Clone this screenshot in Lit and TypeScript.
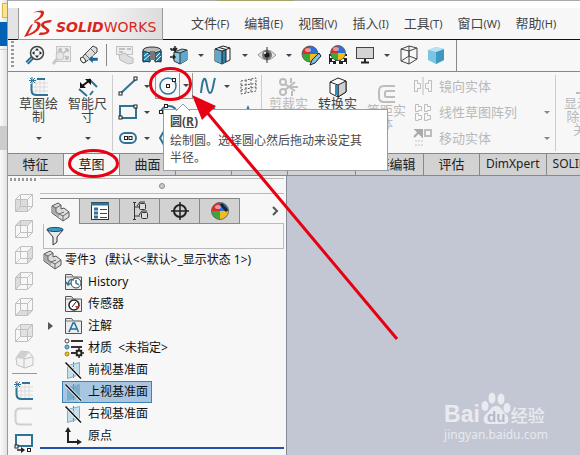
import { LitElement, html, svg, css, nothing, TemplateResult } from "lit";
import { customElement, property, state } from "lit/decorators.js";
import { classMap } from "lit/directives/class-map.js";

const STEEL = "#2f7396";
const FADE = "#bdbdbd";

const node = (x: number, y: number) =>
  svg`<rect x=${x - 1.5} y=${y - 1.5} width="3" height="3" fill="#fff" stroke="#222" />`;

const cubeFace = (face: TemplateResult | ReturnType<typeof svg>) => svg`
  ${face}
  <path d="M1.500 6.500h12v12h-12z M6.500 1.500h12v12h-12z M1.500 6.500l5-5 M13.500 6.500l5-5 M13.500 18.500l5-5 M1.500 18.500l5-5" fill="none" stroke="#c0c0c0" />`;

const ball = (x: number, y: number, r: number) => svg`
  <g transform="translate(${x} ${y})">
    <path d="M0 0V${-r}A${r} ${r} 0 0 0 ${-r} 0Z" fill="#e02a2a" />
    <path d="M0 0H${r}A${r} ${r} 0 0 0 0 ${-r}Z" fill="#2f6fd6" />
    <path d="M0 0H${-r}A${r} ${r} 0 0 0 0 ${r}Z" fill="#3aa63c" />
    <path d="M0 0V${r}A${r} ${r} 0 0 0 ${r} 0Z" fill="#f0bd1c" />
    <circle r=${r} fill="none" stroke="#555" stroke-width=".8" />
    <ellipse cx="-2" cy="-4" rx="3" ry="2" fill="#fff" opacity=".5" />
  </g>`;

const plane = (fill: string) => svg`
  <path d="M3.500 5.500l12-3v12l-12 4z" fill=${fill} stroke="#86abc2" />
  <path d="M9.500 2v16" stroke="#5d8ba8" stroke-dasharray="2 1" />
  <path d="M1.500 2.500l15.500 16" stroke="#fff" stroke-width="3" />
  <path d="M1.500 2.500l15.500 16" stroke="#111" stroke-width="1.500" />`;

const part = svg`
  <path d="M2 4l6-3 3 2v4l3-1 5 4v5l-6 4-11-8z" fill="#dcdcdc" stroke="#555" stroke-linejoin="round" />
  <path d="M2 4l4 2v7l-4-3zM6 10l3 2v4l-3-3z" fill="#aaa" />
  <path d="M2 4l4 2 5-3M6 6v4l3 2 5-2M9 12l4 2 6-4M13 14v5" fill="none" stroke="#666" />`;

const folder = (inner: ReturnType<typeof svg>) => svg`
  <path d="M1.500 17.500v-15h6l2 2.500h8v12.500z" fill="#ececec" stroke="#555" />
  <path d="M2 5h7" stroke="#777" />
  ${inner}`;

const ICONS: Record<string, ReturnType<typeof svg>> = {
  zoom: svg`
    <path d="M8 12l-6 6" stroke="#1e5d80" stroke-width="4" />
    <path d="M8 12l-6 6" stroke="#6fb6d8" stroke-width="1.500" />
    <circle cx="12" cy="8" r="6.500" fill="#f2f6f8" stroke="#444" stroke-width="1.500" />
    <path d="M12 3l2 2.500h-4zM12 13l2-2.500h-4zM7 8l2.500-2v4zM17 8l-2.500-2v4z" fill="#222" />`,
  zoomArea: svg`
    <rect x="4.500" y="1.500" width="14" height="15" fill="#ededed" stroke="#c4c4c4" />
    <path d="M7 4l4 4M16 4l-4 4M16 14l-3-3M7 4h3M7 4v3M16 4h-3M16 4v3M16 14v-3M16 14h-3" stroke="#bbb" fill="none" stroke-width="1.500" />
    <circle cx="8" cy="11" r="4" fill="#e6e6e6" stroke="#c4c4c4" />
    <path d="M5 14l-4 5" stroke="#c9c9c9" stroke-width="3" />`,
  previous: svg`
    <path d="M2 15L5 10 14 1l4 2v4L8 16l-4 2z" fill="#ddd" stroke="#444" />
    <path d="M6 9l4 4M12 4l4 4" stroke="#666" /><ellipse cx="4" cy="15" rx="2" ry="3" transform="rotate(-40 4 15)" fill="#fff" stroke="#444" />
    <path d="M9 14l5-4v2.500h5v3.500h-5v2.500z" fill="#1c658f" stroke="#fff" stroke-width=".5" />`,
  sectionOff: svg`
    <rect x="1.500" y="1.500" width="16" height="8" fill="#eee" stroke="#c2c2c2" />
    <path d="M4 4h6M12 4h4M4 7h4" stroke="#c2c2c2" stroke-width="2" />
    <path d="M4 10l6-2 3 3 5 2v5l-5 1-8-4z" fill="#ddd" stroke="#bbb" />`,
  section: svg`
    <path d="M1 5c1-4 17-4 18 0v12l-6-1V7H8v9l-7 1z" fill="#bbb" stroke="#333" />
    <path d="M1 6l7 2v9l-7-1z" fill="#2f86ad" stroke="#123c52" /><path d="M19 6l-6 2v9l6-1z" fill="#2f86ad" stroke="#123c52" />
    <path d="M2 11l4-3M2 15l6-5M14 12l4-4M14 16l5-5" stroke="#d9f0fa" />
    <path d="M8 8c1-1.500 4-1.500 5 0v7H8z" fill="#777" />`,
  orient: svg`
    <path d="M5 7l8-3 5 1v10l-7 4-6-3z" fill="#8cc6e2" stroke="#333" />
    <path d="M11 8l7-3v10l-7 4z" fill="#5fa9cc" />
    <path d="M5 7l6 1v11M11 8l7-3" stroke="#333" fill="none" />
    <path d="M6 1v4M4 3l2 3 2-3M1 12h5M4 10l2 2-2 2M2 5h3M2 5v-2" stroke="#222" fill="none" stroke-width="1.500" />`,
  display: svg`
    <path d="M2 4l8-3 7 2v12l-8 4-7-3z" fill="#f3f5f6" stroke="#222" stroke-linejoin="round" />
    <path d="M2 4l7 2v13l-7-3z" fill="#5ba9cd" /><path d="M9 6l4-1.500v12.500l-4 2z" fill="#2f7fa8" />
    <path d="M2 4l7 2 8-3M9 6v13M13 4.500v12.500M6 2.500l7 2" stroke="#222" fill="none" />`,
  eye: svg`
    <path d="M1 10q9-10 18 0q-9 10-18 0z" fill="#e3e3e3" stroke="#999" />
    <circle cx="10" cy="10" r="5" fill="#777" /><circle cx="10" cy="10" r="2.500" fill="#111" />
    <path d="M10 2v16" stroke="#333" /><circle cx="8" cy="8" r="1" fill="#fff" />`,
  appearance: svg`${ball(9, 9, 8)}<path d="M18 8l-7 7-2 5 5-2 6-7z" fill="#7fc3e3" stroke="#123" />`,
  scene: svg`
    <rect x="1" y="9" width="18" height="10" fill="#222" />
    <path d="M2 11h3v2H2zM8 16h3v3H8zM4 14h3v2H4zM13 14h3v2h-3zM16 11h3v2h-3zM2 17h3v2H2zM15 17h3v2h-3z" fill="#fff" />${ball(10, 8, 7.5)}`,
  monitor: svg`
    <rect x="1.500" y="2.500" width="17" height="11" fill="#d4d4d4" stroke="#444" />
    <path d="M10 14v4M6 17.500h8" stroke="#222" stroke-width="2" />`,
  wire: svg`
    <path d="M2 4l8-3 8 2v11l-8 5-8-3zM2 4l8 2 8-3M10 6v13M10 1v10M2 16l8-5 8 3" fill="none" stroke="#444" />`,
  solid: svg`
    <path d="M2 5l8-3 8 2v11l-8 4-8-4z" fill="#7cc4e4" /><path d="M10 7l8-3v11l-8 4z" fill="#4098c0" />
    <path d="M2 5l8-3 8 2-8 3z" fill="#b9e2f3" />`,
  sketch: svg`
    <path d="M7 2v17M11 2v17M15 2v17M3 6h16M3 10h16M3 14h16" stroke="#dcdcdc" />
    <path d="M8 2h8M2.500 7v6q0 5 5 5H19" stroke=${STEEL} stroke-width="2" fill="none" />
    <path d="M3 0v7M0 3.500h7M1 1l5 5M6 1L1 6" stroke=${STEEL} />`,
  dimension: svg`
    <path d="M11 2l8 8M1 12l8 7M12 18l3-4" stroke=${STEEL} stroke-width="2" fill="none" />
    <path d="M3 10l9-7" stroke="#111" stroke-width="2" /><path d="M7 2h6v6zM2 5v6h6z" fill="#111" />`,
  line: svg`<path d="M3 17L18 3" stroke=${STEEL} stroke-width="2" />${node(2.5, 17.5)}${node(17.5, 2.5)}`,
  rect: svg`<rect x="2" y="4" width="16" height="12" fill="none" stroke=${STEEL} stroke-width="2" />${node(2.5, 15.5)}${node(17.5, 4.5)}`,
  slot: svg`<rect x="2" y="5" width="16" height="10" rx="5" fill="none" stroke=${STEEL} stroke-width="2" />${node(8, 10)}${node(12.5, 10)}`,
  circle: svg`<circle cx="10" cy="10" r="8" fill="none" stroke=${STEEL} stroke-width="1.500" />${node(10, 10)}${node(16, 4)}`,
  arc: svg`<path d="M2 12q2-8 9-8t8 8" fill="none" stroke=${STEEL} stroke-width="2" />${node(3, 10)}${node(8, 4)}`,
  polygon: svg`<path d="M6 3h8l5 7-5 7H6l-4-7z" fill="none" stroke=${STEEL} stroke-width="2" />`,
  spline: svg`<path d="M3 17C4 8 5 2 7 3S9 17 12 17 15 8 17 2" fill="none" stroke=${STEEL} stroke-width="2" />`,
  ellipse: svg`<circle cx="10" cy="10" r="7" fill="none" stroke=${STEEL} stroke-width="2" />`,
  planeGrid: svg`<path d="M3 5l15-3v13L3 18zM8 4v13M13 3v13M3 9.500l15-2M3 14l15-3" fill="none" stroke="#555" stroke-dasharray="2 1.500" />`,
  cone: svg`<path d="M5 18l5-13 5 13" fill="none" stroke=${STEEL} stroke-width="1.500" />`,
  trim: svg`
    <g fill="none" stroke="#bcbcbc" stroke-width="2"><circle cx="4" cy="5" r="3" /><circle cx="4" cy="15" r="3" />
    <path d="M6 7l10 7M6 13L16 5M9 10h10M12 1v5M13 14v5" /></g>`,
  convert: svg`
    <path d="M2 5l8-4 8 3v11l-8 5-8-4z" fill="#fff" stroke="#222" stroke-linejoin="round" />
    <path d="M10 8l8-4v11l-8 5z" fill="#d0d0d0" stroke="#222" /><path d="M2 5l8 3M10 8v12" stroke="#222" fill="none" />
    <path d="M8.500 8v10" stroke="#2a8fc0" stroke-width="3" />`,
  offset: svg`<path d="M18 2H7q-5 0-5 5v6q0 5 5 5h11M18 7h-8q-2 0-2 2v3q0 1 1 1h9" fill="none" stroke=${FADE} stroke-width="2" />`,
  mirror: svg`<path d="M10 1v18M1.500 4.500h3v3h3v5h-3v3h-3zM18.500 4.500h-3v3h-3v5h3v3h3z" fill="none" stroke=${FADE} />`,
  pattern: svg`
    ${[[2, 2], [11, 2], [2, 11], [11, 11]].map(([x, y]) => svg`<path transform="translate(${x} ${y})" d="M.5.500h3v2h3v4h-3v1h-3z" fill="none" stroke=${FADE} />`)}`,
  move: svg`
    <path d="M1 9l6-6M3 2h6v6z" stroke="#aaa" stroke-width="2" fill="#aaa" /><rect x="12" y="2" width="6" height="6" fill="none" stroke=${FADE} stroke-width="2" />
    <path d="M2 13h8M2 17h8" stroke="#ddd" stroke-width="2" stroke-dasharray="2 1" />`,
  relations: svg`<path d="M6 1v14M0 16h14" stroke=${FADE} stroke-width="2" />`,
  part,
  props: svg`
    <rect x="1.500" y="1.500" width="17" height="17" fill="#fff" stroke="#333" /><path d="M1 3h18" stroke=${STEEL} stroke-width="3" />
    <path d="M4 8h4M4 12h4M4 16h4" stroke=${STEEL} stroke-width="3" /><path d="M10 8.500h7M10 12.500h7M10 16.500h7" stroke="#444" />`,
  config: svg`
    <path d="M3 1.500h3M3 18.500h3M4.500 1v18M5 6h4M5 15h5" stroke="#333" fill="none" />
    <rect x="9.500" y="2.500" width="6" height="6" rx="1" fill="#ddd" stroke="#333" /><rect x="11.500" y="11.500" width="6" height="6" rx="1" fill="#ddd" stroke="#333" />
    <path d="M7 5l3-4h5M9 14l3-4h5" stroke="#333" fill="none" />`,
  target: svg`<circle cx="10" cy="10" r="6" fill="none" stroke="#222" stroke-width="2" /><path d="M10 1v18M1 10h18" stroke="#222" stroke-width="1.500" />`,
  render: svg`${ball(10, 10, 8.5)}<path d="M11 3l6 7" stroke="#222" stroke-width="3" />`,
  filter: svg`
    <path d="M2 4l6 7v8l4-3v-5l6-7z" fill="#e9e9e9" stroke="#333" /><ellipse cx="10" cy="3.500" rx="8" ry="2" fill="#3e9cc6" stroke="#1d4e68" />`,
  history: folder(svg`<circle cx="12" cy="11" r="5" fill="#fff" stroke="#444" /><path d="M12 8v3l3 2M4 12q1-6 6-4M2 10l2 3 3-2" fill="none" stroke=${STEEL} stroke-width="1.500" />`),
  sensor: folder(svg`<circle cx="10" cy="11" r="5" fill="#fff" stroke="#222" stroke-width="1.500" /><path d="M8 13l4-5" stroke="#222" /><path d="M11 12h4l-2 3z" fill="#e0401c" />`),
  note: folder(svg`<path d="M5 16l4-9h1.500l4 9M7 13h6" fill="none" stroke="#1f6f9c" stroke-width="1.500" />`),
  material: svg`
    <circle cx="3" cy="3" r="2" fill="#fff" stroke="#444" /><circle cx="3" cy="9" r="2" fill="#6cc0e6" stroke=${STEEL} /><circle cx="3" cy="16" r="2" fill="#f4c01c" stroke="#a8820d" />
    <path d="M7 3h12M7 9h11M7 15h4" stroke="#333" stroke-width="2" /><circle cx="15" cy="15" r="2.500" fill="#eee" stroke="#222" stroke-width="2" />
    <path d="M15 10v2M15 18v2M10 15h2M18 15h2M12 12l1 1M18 12l-1 1M12 18l1-1M18 18l-1-1" stroke="#222" stroke-width="1.500" />`,
  plane: plane("#c5dfec"),
  planeOn: plane("#79aecb"),
  origin: svg`<path d="M4 17V3M3 16h13" stroke="#222" stroke-width="2" /><path d="M1 6l3-5 3 5zM13 13l5 3-5 3z" fill="#222" />`,
  front: cubeFace(svg`<path d="M1.500 6.500h12v12h-12z" fill="#dcdcdc" />`),
  top: cubeFace(svg`<path d="M1.500 6.500l5-5h12l-5 5z" fill="#dcdcdc" />`),
  right: cubeFace(svg`<path d="M13.500 6.500l5-5v12l-5 5z" fill="#dcdcdc" />`),
  left: cubeFace(svg`<path d="M1.500 6.500l5-5v12l-5 5z" fill="#dcdcdc" />`),
  bottom: cubeFace(svg`<path d="M1.500 18.500l5-5h12l-5 5z" fill="#dcdcdc" />`),
  back: cubeFace(svg`<path d="M6.500 1.500h12v12h-12z" fill="#e2e2e2" />`),
  normal: svg`<path d="M2 9l5-7 8 1 4 5v8l-8 3-8-3z" fill="#f2f2f2" stroke="#c0c0c0" /><path d="M2 9l5-7 8 1-5 7z" fill="#d0d0d0" /><path d="M10 10v9M10 10l8-2" stroke="#c0c0c0" />`,
  corner: svg`<path d="M18 1.500H6q-4.500 0-4.500 4.500v7q0 4.500 4.500 4.500h12" fill="none" stroke="#cfcfcf" stroke-width="2" />`,
  rectMove: svg`
    <path d="M2 13V2h16v11z" fill="none" stroke=${STEEL} stroke-width="2" /><rect x="1" y="12" width="3" height="3" fill="#fff" stroke="#222" />
    <path d="M3 17h5" stroke="#222" stroke-width="1.500" /><path d="M7 14l4 3-4 3z" fill="#222" /><rect x="13.500" y="15.500" width="3" height="3" fill="#fff" stroke="#222" />`,
};

@customElement("cad-icon")
export class CadIcon extends LitElement {
  @property() name = "";

  static styles = css`
    :host { display: block; width: 20px; height: 20px; flex: none; }
    .glyph { display: block; width: 20px; height: 20px; overflow: visible; }
  `;

  render() {
    return html`<svg class="glyph" viewBox="0 0 20 20" aria-hidden="true">${ICONS[this.name] ?? nothing}</svg>`;
  }
}

type Tool = { icon: string; label: string; menu?: boolean; on?: boolean };

const MENUS = [["文件", "F"], ["编辑", "E"], ["视图", "V"], ["插入", "I"], ["工具", "T"], ["窗口", "W"], ["帮助", "H"]];

const VIEW_TOOLS: (Tool | "sep")[] = [
  { icon: "zoom", label: "整屏显示全图" },
  { icon: "zoomArea", label: "局部放大" },
  { icon: "previous", label: "上一视图" },
  "sep",
  { icon: "sectionOff", label: "动态注解" },
  { icon: "section", label: "剖面视图" },
  { icon: "orient", label: "视图定向", menu: true },
  { icon: "display", label: "显示样式", menu: true },
  { icon: "eye", label: "隐藏/显示项目", menu: true },
  { icon: "appearance", label: "编辑外观" },
  { icon: "scene", label: "应用布景" },
  { icon: "monitor", label: "视图设定", menu: true },
  { icon: "wire", label: "线架图" },
  { icon: "solid", label: "上色" },
  "sep",
];

const SHAPES: Tool[] = [
  { icon: "line", label: "直线", menu: true },
  { icon: "circle", label: "圆", menu: true, on: true },
  { icon: "spline", label: "样条曲线", menu: true },
  { icon: "planeGrid", label: "基准面" },
  { icon: "rect", label: "边角矩形", menu: true },
  { icon: "arc", label: "圆弧", menu: true },
  { icon: "ellipse", label: "椭圆", menu: true },
  { icon: "cone", label: "圆锥" },
  { icon: "slot", label: "槽口", menu: true },
  { icon: "polygon", label: "多边形", menu: true },
];

const EDITS: Tool[] = [
  { icon: "mirror", label: "镜向实体" },
  { icon: "pattern", label: "线性草图阵列", menu: true },
  { icon: "move", label: "移动实体", menu: true },
];

// Tabs without a text lie wholly under the tooltip and carry only an accessible name.
const TABS: { name: string; text?: string; wide?: boolean }[] = [
  { name: "特征", text: "特征" },
  { name: "草图", text: "草图" },
  { name: "曲面", text: "曲面" },
  { name: "钣金" },
  { name: "焊件" },
  { name: "模具工具", wide: true },
  { name: "直接编辑", text: "直接编辑", wide: true },
  { name: "评估", text: "评估" },
  { name: "DimXpert", text: "DimXpert" },
  { name: "SOLIDWORKS 插件", text: "SOLIDWORKS 插件" },
];

const SIDE: (string | null)[] = ["front", "top", "right", "left", "bottom", "back", "normal", null, "sketch", "corner", "rectMove"];

const TREE = [
  { icon: "history", label: "History" },
  { icon: "sensor", label: "传感器" },
  { icon: "note", label: "注解", open: true },
  { icon: "material", label: "材质  <未指定>" },
  { icon: "plane", label: "前视基准面" },
  { icon: "planeOn", label: "上视基准面" },
  { icon: "plane", label: "右视基准面" },
  { icon: "origin", label: "原点" },
];

@customElement("app-root")
export class AppRoot extends LitElement {
  @state() private tab = "草图";
  @state() private selected = "上视基准面";

  static styles = css`
    :host {
      display: block; position: relative; height: 100vh; overflow: hidden;
      font: 12px/16px "Noto Sans", "Noto Sans CJK SC", sans-serif; color: #222; background: #f7f7f7;
    }
    * { box-sizing: border-box; }
    button { font: inherit; color: inherit; background: none; border: 0; padding: 0; margin: 0; }
    .shell { display: flex; height: 100%; }
    .desk { flex: none; width: 8px; background: linear-gradient(90deg, #fbfbfb, #e2e2e2); border-right: 1px solid #999; }
    .desk-folder { height: 15px; margin: 3px 0 4px 2px; background: #fbe391; border: 1px solid #d8b64c; border-right: 0; }
    .desk-title { height: 24px; background: #0462b4; }
    .desk-bar { height: 4px; border-bottom: 1px solid #ccc; }
    .desk-block { height: 24px; margin-top: 76px; background: #ccc; }
    .window { flex: 1; min-width: 0; display: flex; flex-direction: column; }
    .edge { flex: none; height: 8px; background: #fff; border-top: 1px solid #aaa; }
    .edge-mark { width: 77px; height: 1px; margin: -1px 0 0 209px; background: #a8a266; }

    .menubar { flex: none; display: flex; height: 32px; border-bottom: 1px solid #111; }
    .menu-grip { flex: none; width: 10px; background: #e4e4e4; }
    .brand { flex: none; width: 145px; height: 32px; display: flex; align-items: center; gap: 3px; padding-left: 5px;
      border: 1px solid #999; border-top: 0; background: linear-gradient(90deg, #fdfdfd, #f2f2f2 60%, #dcdcdc); }
    .brand-mark { width: 29px; height: 28px; flex: none; }
    .brand-name { color: #d8261c; font: 14px/20px "DejaVu Sans", sans-serif; padding-top: 7px; }
    .brand-strong { font-weight: 700; font-style: oblique; }
    .menus { display: flex; gap: 15px; padding-left: 28px; align-items: center; white-space: nowrap; }
    .menu { font-size: 13px; line-height: 20px; color: #444; }
    .key { font-size: 11px; }

    .viewbar { flex: none; display: flex; align-items: center; height: 32px; border-bottom: 1px solid #888; padding-bottom: 1px; }
    .grip { flex: none; width: 3px; height: 28px; margin: 0 7px 0 3px; background: repeating-linear-gradient(#999 0 2px, transparent 2px 4px); }
    .vtool { width: 27px; height: 28px; display: grid; place-items: center; }
    .vsep { width: 9px; height: 22px; display: flex; justify-content: center; }
    .vsep::before { content: ""; border-left: 1px solid #888; }
    .vsep.last { height: 31px; width: 15px; }
    .drop { width: 17px; display: grid; place-items: center; align-self: stretch; }
    .drop::after { content: ""; border: 3px solid transparent; border-top-color: #444; border-bottom: 0; }

    .ribbon { flex: none; display: flex; height: 81px; padding-left: 6px; overflow: hidden; }
    .big { flex: none; width: 49px; display: flex; flex-direction: column; align-items: center; justify-content: flex-start;
      padding-top: 5px; font-size: 13px; line-height: 13px; color: #444; white-space: nowrap; }
    .big.low { padding-top: 12px; }
    .big.wide { width: 56px; }
    .big.off { color: #b9b9b9; }
    .lines { display: block; height: 40px; }
    .big-drop { border: 3px solid transparent; border-top-color: #444; border-bottom: 0; }
    .rule { flex: none; width: 1px; margin: 3px 2px 2px 0; background: #ccc; }
    .shapes { flex: none; display: grid; grid-template-columns: 38px 38px 38px 26px; grid-auto-rows: 26px; column-gap: 2px; padding-top: 1px; }
    .shape { display: flex; }
    .shape-btn { width: 25px; display: grid; place-items: center; }
    .shape .drop { width: 13px; }
    .shape.on .shape-btn, .shape.on .drop { border: 1px solid #999; border-top: 0; }
    .shape.on .drop { border-left: 0; }
    .edits { flex: none; width: 144px; padding: 1px 0 0 2px; }
    .edit { display: flex; width: 100%; height: 26px; align-items: center; gap: 6px; font-size: 13px; color: #b9b9b9; text-align: left; }
    .edit-name { flex: 1; }
    .edit-drop { border: 3px solid transparent; border-top-color: #888; border-bottom: 0; margin-right: 5px; }

    .tabs { flex: none; display: flex; height: 23px; border-top: 1px solid #888; border-bottom: 1px solid #888; background: #d2d2d2; overflow: hidden; }
    .tab { flex: none; min-width: 56px; padding: 0 6px 1px; border-right: 1px solid #888; font-size: 13px; white-space: nowrap; }
    .tab.wide { min-width: 68px; }
    .tab.latin { font-size: 12px; }
    .tab.active { background: #f7f7f7; }

    .main { flex: 1; min-height: 0; display: flex; }
    .side { flex: none; width: 32px; display: flex; flex-direction: column; align-items: center; overflow: hidden; padding-top: 2px; }
    .side-grip { flex: none; width: 28px; height: 3px; margin-bottom: 9px; background: repeating-linear-gradient(90deg, #999 0 2px, transparent 2px 4px); }
    .side-btn { flex: none; height: 26px; display: grid; place-items: center; }
    .side-rule { flex: none; width: 25px; height: 1px; margin: 1px 0 4px; background: #999; }
    .panel { flex: none; width: 247px; border-right: 1px solid #858a99; padding-right: 2px; overflow: hidden; }
    .split { height: 16px; margin-top: 2px; border-top: 1px solid #bbb; border-bottom: 1px solid #bbb; display: grid; place-items: center; }
    .dot { width: 6px; height: 6px; border: 1px solid #888; border-radius: 50%; background: #ccc; }
    .ptabs { display: flex; margin-top: 4px; height: 26px; }
    .ptab { width: 40px; display: grid; place-items: center; border: 1px solid #888; border-left: 0; background: #d2d2d2; }
    .ptab.active { background: none; border-bottom: 0; }
    .more { flex: 1; display: grid; justify-content: end; align-items: center; padding-right: 5px; border-bottom: 1px solid #bbb; }
    .chev { width: 7px; height: 12px; display: block; }
    .filter { display: flex; align-items: center; height: 25px; margin-left: 3px; padding-left: 1px; border: 1px solid #bbb; border-top: 0; }
    .query { flex: 1; min-width: 0; border: 0; outline: 0; background: none; font: inherit; }
    .tree, .branch { list-style: none; margin: 0; padding: 0; }
    .tree { border-bottom: 2px solid #2350a8; height: 200px; }
    .root { display: flex; align-items: center; gap: 3px; height: 22px; padding-left: 2px; white-space: pre; color: #111; }
    .leaf { display: flex; align-items: center; height: 22px; }
    .twist { width: 22px; display: flex; padding-left: 8px; }
    .twist.open::before { content: ""; border: 4px solid transparent; border-left: 5px solid #555; border-right: 0; }
    .row { display: flex; align-items: center; gap: 4px; height: 22px; padding: 0 3px 0 1px; border: 1px solid transparent; color: #111; white-space: pre; }
    .row.picked { background: #a7c6e1; border-color: #3f82b4; }

    .canvas { flex: 1; min-width: 0; background: #c3c7d3; display: flex; flex-direction: column; justify-content: flex-end; align-items: flex-end; padding: 0 32px 12px 0; }
    .mark { display: grid; color: #e9ebf1; }
    .mark-top { display: flex; align-items: flex-end; height: 36px; padding-bottom: 1px; }
    .mark-bai { font: 700 23px/24px "Liberation Sans", sans-serif; }
    .mark-paw { width: 32px; height: 35px; margin-left: -1px; }
    .mark-du { font: 700 15px "Liberation Sans", sans-serif; fill: #b4b9c8; }
    .mark-cn { font: 500 17px/22px "Noto Sans CJK SC", sans-serif; }
    .mark-url { font-size: 12px; line-height: 16px; color: #e6e9ef; }

    .tip { position: absolute; left: 163px; top: 109px; width: 225px; height: 62px; padding: 3px 18px 0 6px; background: #fff; border: 1px solid #999da6; color: #4a4a4a; line-height: 17px; }
    .tip-nose { position: absolute; left: 12px; top: -7px; width: 14px; height: 8px; }
    .tip-title { display: block; line-height: 18px; margin-bottom: 1px; }
    .ink { position: absolute; left: 0; top: 0; width: 400px; height: 345px; pointer-events: none; }
  `;

  private viewTool(t: Tool | "sep", i: number) {
    if (t === "sep") return html`<span class=${classMap({ vsep: true, last: i === VIEW_TOOLS.length - 1 })}></span>`;
    return html`<button class="vtool" aria-label=${t.label}><cad-icon name=${t.icon}></cad-icon></button>
      ${t.menu ? html`<button class="drop" aria-label="${t.label}选项"></button>` : nothing}`;
  }

  private big(icon: string, lines: string[], extra: Record<string, boolean>, drop = false) {
    return html`<button class=${classMap({ big: true, ...extra })}>
      <cad-icon name=${icon}></cad-icon>
      <span class="lines">${lines.map((l, i) => (i ? html`<br />${l}` : l))}</span>
      ${drop ? html`<span class="big-drop"></span>` : nothing}
    </button>`;
  }

  render() {
    return html`
      <div class="shell">
        <div class="desk">
          <div class="desk-folder"></div><div class="desk-title"></div><div class="desk-bar"></div><div class="desk-block"></div>
        </div>
        <div class="window">
          <div class="edge"><div class="edge-mark"></div></div>
          <header class="menubar">
            <div class="menu-grip"></div>
            <div class="brand">
              <svg class="brand-mark" viewBox="0 0 29 28" aria-hidden="true">
                <g fill="#d8261c">
                  <path d="M9 2.500Q21-2 20 3.500 19 8 11 11.500L10 11Q17 6.500 17 3.500 17 1 9 2.500z" />
                  <path d="M10 11.500Q18 11 16.500 16 14.500 23.500 0 27L5.500 17Q7 14 9 14L4 24.500Q13 20.500 13.500 15.500 13.500 12.500 10 12.500z" />
                  <path d="M28 10L26.500 12.500Q20 12.500 20 14.500 20 15.500 23.500 18 26.500 20 25 22 23 25.500 14.500 25L16 22.500Q22 23 22.500 21 22.500 20 19 18 16 16 17.500 13.500 19.500 10 28 10z" />
                </g>
              </svg>
              <span class="brand-name"><span class="brand-strong">SOLID</span>WORKS</span>
            </div>
            <nav class="menus">
              ${MENUS.map(([n, k]) => html`<button class="menu">${n}<span class="key">(${k})</span></button>`)}
            </nav>
          </header>
          <div class="viewbar"><span class="grip"></span>${VIEW_TOOLS.map((t, i) => this.viewTool(t, i))}</div>
          <div class="ribbon">
            ${this.big("sketch", ["草图绘", "制"], {}, true)}
            ${this.big("dimension", ["智能尺", "寸"], {}, true)}
            <span class="rule"></span>
            <div class="shapes">
              ${SHAPES.map((s) => html`<div class=${classMap({ shape: true, on: !!s.on })}>
                <button class="shape-btn" aria-label=${s.label}><cad-icon name=${s.icon}></cad-icon></button>
                ${s.menu ? html`<button class="drop" aria-label="${s.label}选项"></button>` : nothing}
              </div>`)}
            </div>
            <span class="rule"></span>
            ${this.big("trim", ["剪裁实"], { off: true })}
            ${this.big("convert", ["转换实"], {})}
            ${this.big("offset", ["等距实", "体"], { off: true, low: true })}
            <div class="edits">
              ${EDITS.map((e) => html`<button class="edit"><cad-icon name=${e.icon}></cad-icon><span class="edit-name">${e.label}</span>
                ${e.menu ? html`<span class="edit-drop"></span>` : nothing}</button>`)}
            </div>
            <span class="rule"></span>
            ${this.big("relations", ["显示/删", "除几何", "关系"], { off: true, wide: true })}
          </div>
          <div class="tabs" role="tablist">
            ${TABS.map((t) => html`<button role="tab" aria-label=${t.name} aria-selected=${t.name === this.tab}
              class=${classMap({ tab: true, active: t.name === this.tab, wide: !!t.wide, latin: /^[A-Z]/.test(t.name) })}
              @click=${() => (this.tab = t.name)}>${t.text ?? nothing}</button>`)}
          </div>
          <div class="main">
            <div class="side">
              <span class="side-grip"></span>
              ${SIDE.map((s) => s ? html`<button class="side-btn" aria-label=${s}><cad-icon name=${s}></cad-icon></button>` : html`<span class="side-rule"></span>`)}
            </div>
            <aside class="panel">
              <div class="split"><span class="dot"></span></div>
              <div class="ptabs">
                ${["part", "props", "config", "target", "render"].map((p, i) => html`<button aria-label=${p}
                  class=${classMap({ ptab: true, active: i === 0 })}><cad-icon name=${p}></cad-icon></button>`)}
                <button class="more" aria-label="更多"><svg class="chev" viewBox="0 0 7 12"><path d="M1 2l4 4-4 4" fill="none" stroke="#555" stroke-width="2" /></svg></button>
              </div>
              <label class="filter"><cad-icon name="filter"></cad-icon><input class="query" type="text" aria-label="过滤" /></label>
              <ul class="tree">
                <li>
                  <div class="root"><cad-icon name="part"></cad-icon>零件3   (默认&lt;&lt;默认&gt;_显示状态 1&gt;)</div>
                  <ul class="branch">
                    ${TREE.map((n) => html`<li class="leaf"><span class=${classMap({ twist: true, open: !!n.open })}></span>
                      <button class=${classMap({ row: true, picked: n.label === this.selected })} @click=${() => (this.selected = n.label)}><cad-icon name=${n.icon}></cad-icon>${n.label}</button></li>`)}
                  </ul>
                </li>
              </ul>
            </aside>
            <main class="canvas">
              <div class="mark">
                <div class="mark-top">
                  <span class="mark-bai">Bai</span>
                  <svg class="mark-paw" viewBox="0 0 32 35">
                    <g fill="#e9ebf1"><ellipse cx="6" cy="15" rx="3.500" ry="5" /><ellipse cx="13" cy="7" rx="3.500" ry="5.500" /><ellipse cx="22" cy="8" rx="3.500" ry="5.500" /><ellipse cx="28" cy="17" rx="3.500" ry="5" />
                    <path d="M17 15c5 0 6 5 10 8 4 4 3 10-2 10H10c-6 0-7-6-3-10 4-3 5-8 10-8z" /></g>
                    <text class="mark-du" x="8" y="31">du</text>
                  </svg>
                  <span class="mark-cn">经验</span>
                </div>
                <span class="mark-url">jingyan.baidu.com</span>
              </div>
            </main>
          </div>
        </div>
      </div>
      <div class="tip" role="tooltip">
        <svg class="tip-nose" viewBox="0 0 14 8"><path d="M0 8l7-7 7 7" fill="#fff" stroke="#999da6" /></svg>
        <strong class="tip-title">圆(<u>R</u>)</strong>
        绘制圆。选择圆心然后拖动来设定其半径。
      </div>
      <svg class="ink" viewBox="0 0 400 345" aria-hidden="true">
        <g fill="none" stroke="#e60012" stroke-width="3">
          <ellipse cx="170.500" cy="84" rx="20" ry="15.500" />
          <ellipse cx="93.500" cy="163.500" rx="24" ry="13" />
          <path d="M205 110L397 339" />
        </g>
        <path d="M192 95l24 11-14 14z" fill="#e60012" />
      </svg>
    `;
  }
}
